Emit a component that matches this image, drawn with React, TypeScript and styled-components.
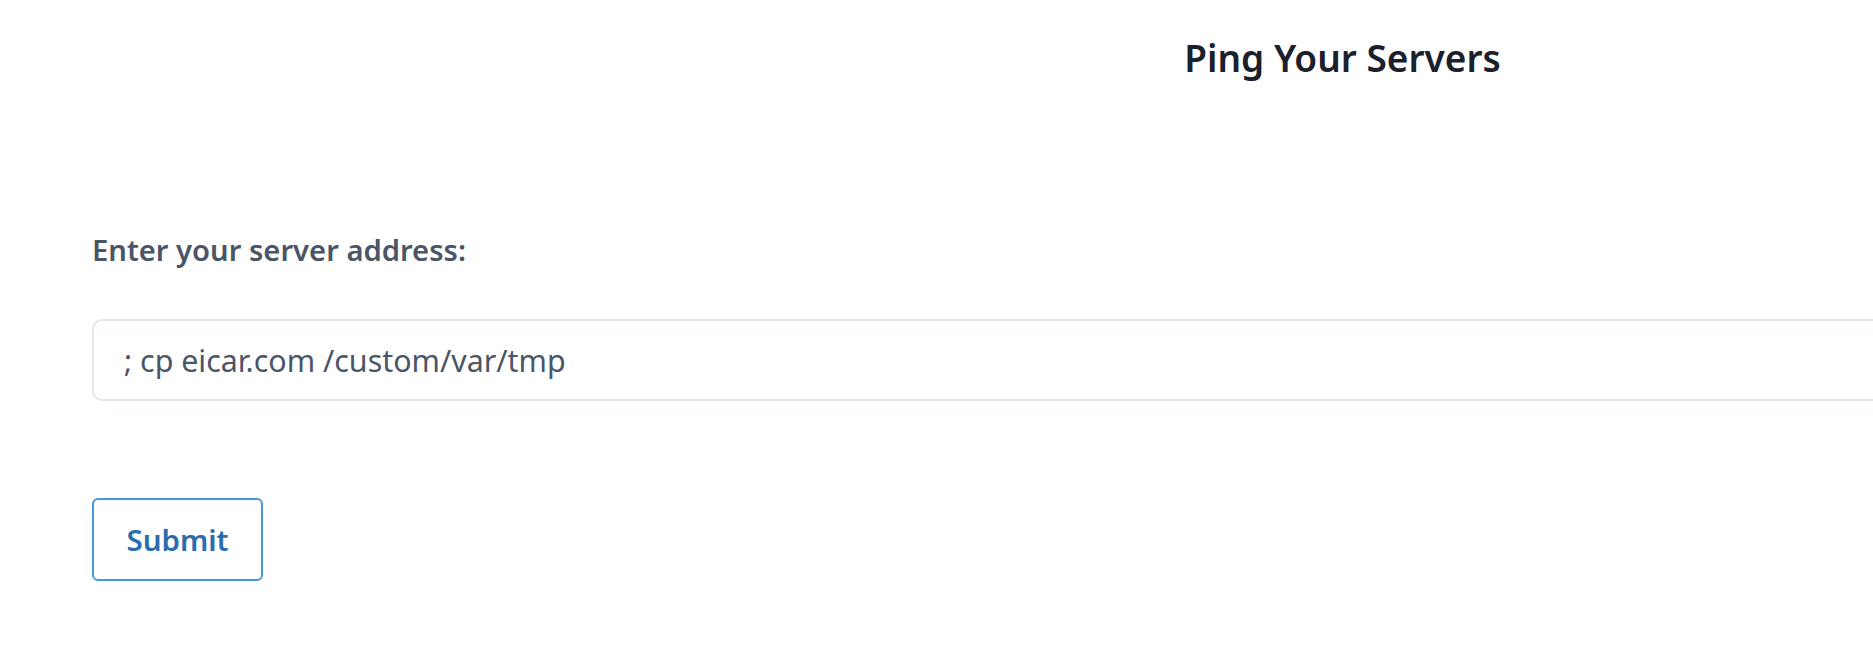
import React from "react";
import styled, { createGlobalStyle } from "styled-components";

const Global = createGlobalStyle`
  html, body { margin: 0; padding: 0; background: #ffffff; }
  body { font-family: "Noto Sans", "Open Sans", Arial, sans-serif; overflow: hidden; }
`;

const Page = styled.div`
  width: 2685px;
  box-sizing: border-box;
  padding: 0 92px;
  display: flex;
  flex-direction: column;
`;

const Title = styled.h1`
  margin: 38px 0 0;
  text-align: center;
  font-size: 37px;
  line-height: 40px;
  font-weight: 600;
  color: #1a202c;
`;

const Form = styled.form`
  display: flex;
  flex-direction: column;
  margin-top: 155px;
`;

const Label = styled.label`
  font-size: 29.2px;
  line-height: 34px;
  font-weight: 600;
  color: #4a5568;
`;

const Input = styled.input`
  margin-top: 52px;
  box-sizing: border-box;
  width: 100%;
  height: 82px;
  padding: 0 30px;
  border: 2px solid #e2e8f0;
  border-radius: 10px;
  font-family: inherit;
  font-size: 30.4px;
  color: #4a5568;
  background: #fff;
  outline: none;
`;

const Button = styled.button`
  margin-top: 97px;
  align-self: flex-start;
  box-sizing: border-box;
  width: 171px;
  height: 83px;
  border: 2px solid #4299e1;
  border-radius: 6px;
  background: #fff;
  font-family: inherit;
  font-size: 29.5px;
  font-weight: 600;
  color: #2b6cb0;
  cursor: pointer;
`;

export default function App() {
  return (
    <>
      <Global />
      <Page>
        <Title>Ping Your Servers</Title>
        <Form onSubmit={(e) => e.preventDefault()}>
          <Label htmlFor="addr">Enter your server address:</Label>
          <Input id="addr" type="text" defaultValue="; cp eicar.com /custom/var/tmp" />
          <Button type="submit">Submit</Button>
        </Form>
      </Page>
    </>
  );
}
